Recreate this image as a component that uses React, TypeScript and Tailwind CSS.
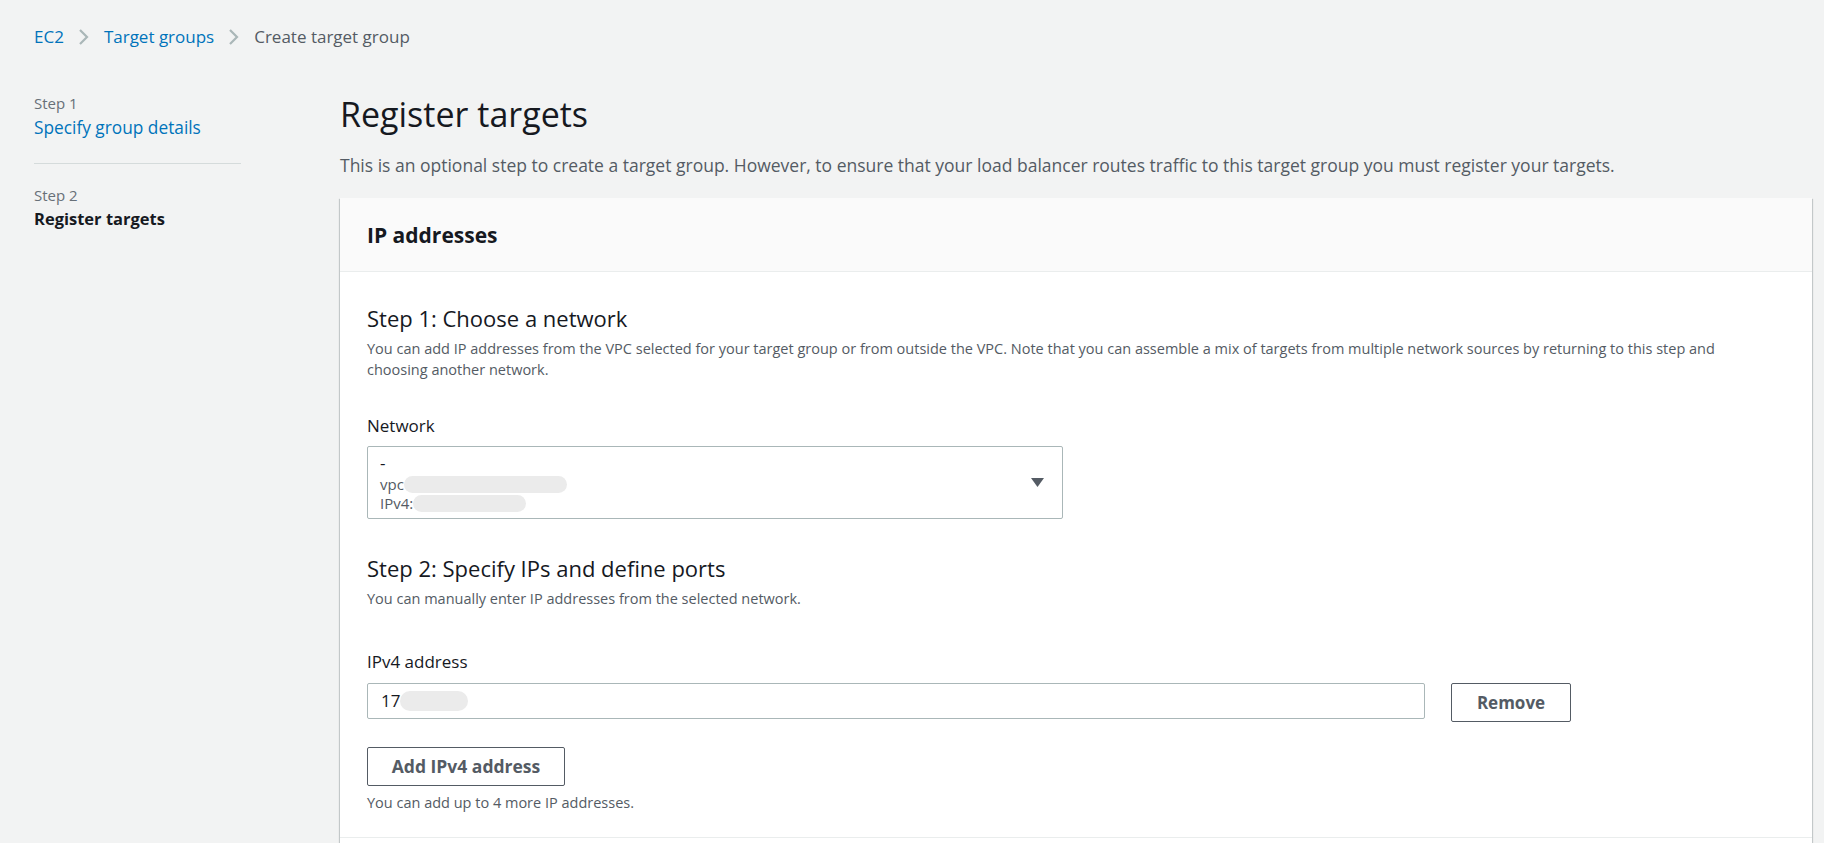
import React from "react";

const Chevron = () => (
  <svg width="14" height="18" viewBox="0 0 14 18" className="mx-[13px]">
    <path d="M3 2l7 7-7 7" fill="none" stroke="#aab7b8" strokeWidth="2.2" />
  </svg>
);

const Blur = ({ w, h = 18 }: { w: number; h?: number }) => (
  <span
    className="inline-block rounded-full bg-[#ebebeb] align-middle"
    style={{ width: w, height: h }}
  />
);

export default function App() {
  return (
    <div
      className="min-h-screen bg-[#f2f3f3] text-[#16191f]"
      style={{ fontFamily: "'Open Sans', 'Noto Sans', sans-serif" }}
    >
      {/* breadcrumbs */}
      <div className="flex items-center pl-[34px] pt-[25px] text-[17px] leading-[24px]">
        <a className="text-[#0073bb]">EC2</a>
        <Chevron />
        <a className="text-[#0073bb]">Target groups</a>
        <Chevron />
        <span className="text-[#545b64]">Create target group</span>
      </div>

      <div className="flex pl-[34px] pr-[12px]">
        {/* side steps */}
        <nav className="w-[207px] shrink-0 pt-[44px]">
          <div className="text-[15px] leading-[20px] text-[#687078]">Step 1</div>
          <a className="mt-[3px] block text-[17.3px] leading-[24px] text-[#0073bb]">Specify group details</a>
          <div className="mt-[23px] border-t border-[#d5dbdb]" />
          <div className="mt-[21px] text-[15px] leading-[20px] text-[#687078]">Step 2</div>
          <div className="mt-[2px] text-[16.5px] font-bold leading-[24px]">Register targets</div>
        </nav>

        {/* main */}
        <main className="ml-[99px] flex-1">
          <h1 className="mt-[43px] text-[34px] leading-[44px] font-normal">Register targets</h1>
          <p className="mt-[17px] text-[17.5px] leading-[24px] text-[#545b64]">
            This is an optional step to create a target group. However, to ensure that your load balancer routes traffic to this target group you must register your targets.
          </p>

          <section className="mt-[21px] bg-white shadow-[0_1px_1px_0_rgba(0,28,36,0.3),1px_1px_1px_0_rgba(0,28,36,0.15),-1px_1px_1px_0_rgba(0,28,36,0.15)]">
            <div className="flex h-[74px] items-center border-b border-[#eaeded] bg-[#fafafa] px-[27px]">
              <h2 className="text-[21px] font-bold leading-[28px]">IP addresses</h2>
            </div>

            <div className="border-b border-[#eaeded] px-[27px] pb-[24px] pt-[31px]">
              <h3 className="text-[22px] leading-[30px]">Step 1: Choose a network</h3>
              <p className="mt-[5px] max-w-[1390px] text-[14.5px] leading-[21px] text-[#545b64]">
                You can add IP addresses from the VPC selected for your target group or from outside the VPC. Note that you can assemble a mix of targets from multiple network sources by returning to this step and choosing another network.
              </p>

              <div className="mt-[35px] text-[17px] leading-[22px]">Network</div>
              <div className="mt-[9px] flex h-[73px] w-[696px] items-center justify-between rounded-[2px] border border-[#aab7b8] pl-[12px] pr-[18px]">
                <div className="flex flex-col">
                  <span className="text-[17px] leading-[20px]">-</span>
                  <span className="mt-[2px] flex items-center text-[15px] leading-[19px] text-[#545b64]">
                    vpc<Blur w={163} h={17} />
                  </span>
                  <span className="flex items-center text-[15px] leading-[19px] text-[#545b64]">
                    IPv4:<Blur w={113} h={17} />
                  </span>
                </div>
                <svg width="13" height="9" viewBox="0 0 13 9">
                  <path d="M0 0h13L6.5 9z" fill="#545b64" />
                </svg>
              </div>

              <h3 className="mt-[34px] text-[22px] leading-[30px]">Step 2: Specify IPs and define ports</h3>
              <p className="mt-[5px] text-[14.5px] leading-[21px] text-[#545b64]">
                You can manually enter IP addresses from the selected network.
              </p>

              <div className="mt-[42px] text-[17px] leading-[22px]">IPv4 address</div>
              <div className="mt-[10px] flex items-start">
                <div className="flex h-[36px] w-[1058px] items-center rounded-[2px] border border-[#aab7b8] px-[13px] text-[17px]">
                  17<Blur w={68} h={20} />
                </div>
                <button className="ml-[26px] h-[39px] w-[120px] rounded-[2px] border border-[#545b64] bg-white text-[17px] font-bold text-[#545b64]">
                  Remove
                </button>
              </div>

              <button className="mt-[25px] h-[39px] w-[198px] rounded-[2px] border border-[#545b64] bg-white text-[17.5px] font-bold text-[#545b64]">
                Add IPv4 address
              </button>
              <p className="mt-[6px] text-[14.5px] leading-[21px] text-[#545b64]">You can add up to 4 more IP addresses.</p>
            </div>
            <div className="h-[40px]" />
          </section>
        </main>
      </div>
    </div>
  );
}
